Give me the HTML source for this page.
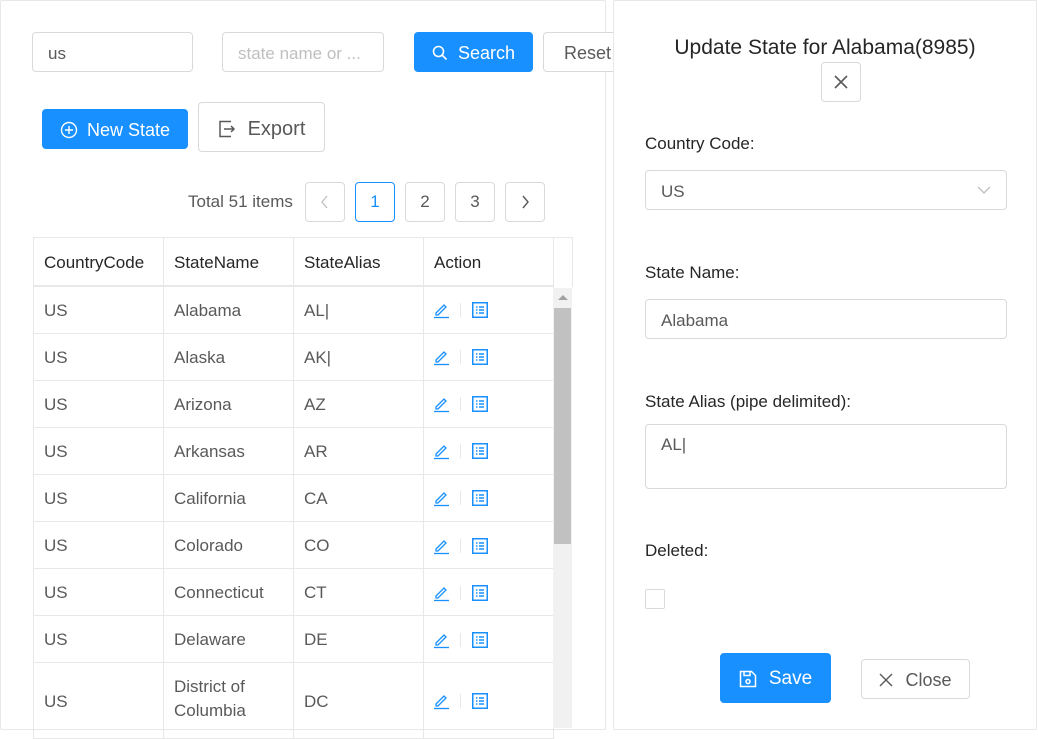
<!DOCTYPE html>
<html><head><style>
*{box-sizing:border-box;margin:0;padding:0}
body{width:1038px;height:715px;overflow:hidden;background:#fff;font-family:"Liberation Sans",sans-serif;font-size:17px;color:#595959;position:relative}
.abs{position:absolute}
.panel{border:1px solid #e8e8e8;border-radius:2px;background:#fff}
.inp{position:absolute;border:1px solid #d9d9d9;border-radius:4px;background:#fff;height:40px;display:flex;align-items:center;padding-left:15px;padding-top:3px;font-size:17px}
.btn{position:absolute;border-radius:4px;display:flex;align-items:center;justify-content:center;font-size:18px;padding-top:2px}
.pri{background:#1890ff;color:#fff}
.def{border:1px solid #d9d9d9;background:#fff;color:#595959}
.pg{position:absolute;top:182px;width:40px;height:40px;border:1px solid #d9d9d9;border-radius:4px;display:flex;align-items:center;justify-content:center;font-size:17px;color:#595959}
table{border-collapse:collapse;position:absolute;left:33px;top:238px;width:520px;table-layout:fixed}
td,th{border:1px solid #e8e8e8;border-top:none;padding:3px 10px 0;text-align:left;font-weight:normal;height:47px;font-size:17px}
th{color:#262626;height:48px;border-bottom:2px solid #e8e8e8;background:#fff}
td{color:#595959}
.lbl{position:absolute;left:645px;color:#262626;font-size:17px}
</style></head><body>
<div class="abs panel" style="left:0;top:0;width:606px;height:730px"></div>

<div class="inp" style="left:32px;top:32px;width:161px;color:#595959">us</div>
<div class="inp" style="left:222px;top:32px;width:162px;color:#bfbfbf">state name or ...</div>
<div class="btn pri" style="left:414px;top:32px;width:119px;height:40px"><svg width="16" height="16" viewBox="0 0 16 16" style="margin-right:10px"><circle cx="6.5" cy="6.5" r="5" fill="none" stroke="#fff" stroke-width="1.6"/><path d="M10.2 10.2L14.5 14.5" stroke="#fff" stroke-width="1.6"/></svg>Search</div>
<div class="btn def" style="left:543px;top:32px;width:80px;height:40px;justify-content:flex-start;padding-left:20px">Reset</div>

<div class="btn pri" style="left:42px;top:109px;width:146px;height:40px"><svg width="18" height="18" viewBox="0 0 18 18" style="margin-right:9px"><circle cx="9" cy="9" r="7.5" fill="none" stroke="#fff" stroke-width="1.4"/><path d="M9 5v8M5 9h8" stroke="#fff" stroke-width="1.4"/></svg>New State</div>
<div class="btn def" style="left:198px;top:102px;width:127px;height:50px;font-size:20px;padding-top:4px"><svg width="18" height="18" viewBox="0 0 18 18" style="margin-right:12px"><path d="M13 1.5H2v15h11M6 9h10M13 6l3 3-3 3" fill="none" stroke="#595959" stroke-width="1.5"/></svg>Export</div>

<div class="abs" style="left:188px;top:192px;font-size:17px">Total 51 items</div>
<div class="pg" style="left:305px;color:#bfbfbf"><svg width="10" height="14" viewBox="0 0 10 14"><path d="M7 1L2 7l5 6" fill="none" stroke="#bfbfbf" stroke-width="1.3"/></svg></div>
<div class="pg" style="left:355px;border-color:#1890ff;color:#1890ff">1</div>
<div class="pg" style="left:405px">2</div>
<div class="pg" style="left:455px">3</div>
<div class="pg" style="left:505px"><svg width="10" height="14" viewBox="0 0 10 14"><path d="M3 1l5 6-5 6" fill="none" stroke="#595959" stroke-width="1.4"/></svg></div>

<div class="abs" style="left:33px;top:237px;width:540px;height:1px;background:#e8e8e8"></div>
<div class="abs" style="left:572px;top:237px;width:1px;height:50px;background:#e8e8e8"></div>
<table>
<colgroup><col style="width:130px"><col style="width:130px"><col style="width:130px"><col style="width:130px"></colgroup>
<tr><th>CountryCode</th><th>StateName</th><th>StateAlias</th><th>Action</th></tr>
<tr><td>US</td><td>Alabama</td><td>AL|</td><td></td></tr>
<tr><td>US</td><td>Alaska</td><td>AK|</td><td></td></tr>
<tr><td>US</td><td>Arizona</td><td>AZ</td><td></td></tr>
<tr><td>US</td><td>Arkansas</td><td>AR</td><td></td></tr>
<tr><td>US</td><td>California</td><td>CA</td><td></td></tr>
<tr><td>US</td><td>Colorado</td><td>CO</td><td></td></tr>
<tr><td>US</td><td>Connecticut</td><td>CT</td><td></td></tr>
<tr><td>US</td><td>Delaware</td><td>DE</td><td></td></tr>
<tr><td style="height:76px;padding-top:4px">US</td><td style="line-height:24px;padding-top:12px;vertical-align:top">District of Columbia</td><td style="padding-top:4px">DC</td><td></td></tr>
</table>
<div class="abs" style="left:553px;top:288px;width:19px;height:440px;background:#f1f1f1"></div>
<div class="abs" style="left:554px;top:308px;width:17px;height:236px;background:#c1c1c1"></div>
<div class="abs" style="left:558px;top:295px;width:0;height:0;border-left:5px solid transparent;border-right:5px solid transparent;border-bottom:5px solid #a3a3a3"></div>

<div id="icons"></div>
<script>
var ys=[310,357,404,451,498,546,593,640,701],h='';
ys.forEach(function(y){h+='<svg class="abs" style="left:433px;top:'+(y-9)+'px" width="16" height="18" viewBox="0 0 16 18"><path d="M3 12L11 4l2 2-8 8H3z" fill="none" stroke="#1890ff" stroke-width="1.3"/><path d="M1 16.5h15" stroke="#1890ff" stroke-width="1.3"/></svg><div class="abs" style="left:460px;top:'+(y-7)+'px;width:1px;height:14px;background:#e8e8e8"></div><svg class="abs" style="left:472px;top:'+(y-8)+'px" width="16" height="16" viewBox="0 0 16 16"><rect x="0.75" y="0.75" width="14.5" height="14.5" fill="none" stroke="#1890ff" stroke-width="1.5"/><path d="M4 5h1.5M4 8h1.5M4 11h1.5M7 5h5M7 8h5M7 11h5" stroke="#1890ff" stroke-width="1.4"/></svg>';});
document.getElementById('icons').innerHTML=h;
</script>

<div class="abs panel" style="left:613px;top:0;width:424px;height:730px"></div>
<div class="abs" style="left:613px;top:36px;width:424px;text-align:center;font-size:21px;color:#262626">Update State for Alabama(8985)</div>
<div class="abs" style="left:821px;top:62px;width:40px;height:40px;border:1px solid #d9d9d9;border-radius:4px;display:flex;align-items:center;justify-content:center"><svg width="16" height="16" viewBox="0 0 16 16"><path d="M2 2l12 12M14 2L2 14" stroke="#595959" stroke-width="1.6"/></svg></div>

<div class="lbl" style="top:134px">Country Code:</div>
<div class="inp" style="left:645px;top:170px;width:362px">US<svg style="position:absolute;right:15px;top:14px" width="14" height="10" viewBox="0 0 14 10"><path d="M1 2l6 6 6-6" fill="none" stroke="#bfbfbf" stroke-width="1.3"/></svg></div>
<div class="lbl" style="top:263px">State Name:</div>
<div class="inp" style="left:645px;top:299px;width:362px;color:#595959">Alabama</div>
<div class="lbl" style="top:392px">State Alias (pipe delimited):</div>
<div class="inp" style="left:645px;top:424px;width:362px;height:65px;align-items:flex-start;padding-top:10px">AL|</div>
<div class="lbl" style="top:541px">Deleted:</div>
<div class="abs" style="left:645px;top:589px;width:20px;height:20px;border:1px solid #d9d9d9;border-radius:2px"></div>

<div class="btn pri" style="left:720px;top:653px;width:111px;height:50px;font-size:19px"><svg width="18" height="18" viewBox="0 0 18 18" style="margin-right:12px"><path d="M1.5 1.5h11l4 4v11h-15z" fill="none" stroke="#fff" stroke-width="1.5"/><path d="M5 1.5v4h6v-4" fill="none" stroke="#fff" stroke-width="1.5"/><circle cx="9" cy="11.5" r="2" fill="none" stroke="#fff" stroke-width="1.5"/></svg>Save</div>
<div class="btn def" style="left:861px;top:659px;width:109px;height:40px;font-size:18px"><svg width="14" height="14" viewBox="0 0 14 14" style="margin-right:12px"><path d="M1 1l12 12M13 1L1 13" stroke="#595959" stroke-width="1.4"/></svg>Close</div>
</body></html>
